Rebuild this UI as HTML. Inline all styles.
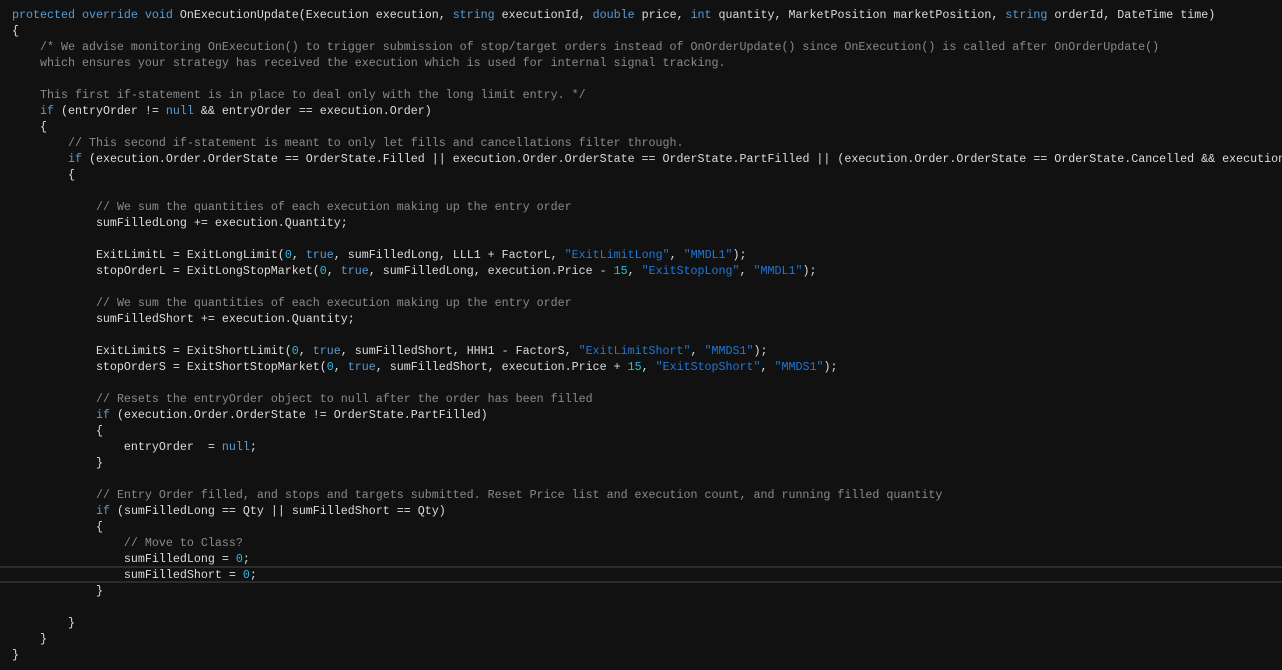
<!DOCTYPE html>
<html><head><meta charset="utf-8"><style>
html,body{margin:0;padding:0;background:#111111;width:1282px;height:670px;overflow:hidden;position:relative}
pre{margin:0;position:absolute;left:12px;top:7px;width:1270px;overflow:hidden;font-family:"Liberation Mono",monospace;font-size:11.67px;line-height:16px;color:#dcdcdc;white-space:pre}
.k{color:#569cd6}.c{color:#8a8a8a}.s{color:#1f78d6}.n{color:#2db7e8}
.hl{position:absolute;left:0;top:566px;width:1282px;height:13px;border-top:2px solid #2b2b2b;border-bottom:2px solid #2b2b2b}
</style></head><body>
<div class="hl"></div>
<pre><span class="k">protected override void</span> OnExecutionUpdate(Execution execution, <span class="k">string</span> executionId, <span class="k">double</span> price, <span class="k">int</span> quantity, MarketPosition marketPosition, <span class="k">string</span> orderId, DateTime time)
{
    <span class="c">/* We advise monitoring OnExecution() to trigger submission of stop/target orders instead of OnOrderUpdate() since OnExecution() is called after OnOrderUpdate()
    which ensures your strategy has received the execution which is used for internal signal tracking.

    This first if-statement is in place to deal only with the long limit entry. */</span>
    <span class="k">if</span> (entryOrder != <span class="k">null</span> &amp;&amp; entryOrder == execution.Order)
    {
        <span class="c">// This second if-statement is meant to only let fills and cancellations filter through.</span>
        <span class="k">if</span> (execution.Order.OrderState == OrderState.Filled || execution.Order.OrderState == OrderState.PartFilled || (execution.Order.OrderState == OrderState.Cancelled &amp;&amp; execution.Order.Filled &gt; 0))
        {

            <span class="c">// We sum the quantities of each execution making up the entry order</span>
            sumFilledLong += execution.Quantity;

            ExitLimitL = ExitLongLimit(<span class="n">0</span>, <span class="k">true</span>, sumFilledLong, LLL1 + FactorL, <span class="s">"ExitLimitLong"</span>, <span class="s">"MMDL1"</span>);
            stopOrderL = ExitLongStopMarket(<span class="n">0</span>, <span class="k">true</span>, sumFilledLong, execution.Price - <span class="n">15</span>, <span class="s">"ExitStopLong"</span>, <span class="s">"MMDL1"</span>);

            <span class="c">// We sum the quantities of each execution making up the entry order</span>
            sumFilledShort += execution.Quantity;

            ExitLimitS = ExitShortLimit(<span class="n">0</span>, <span class="k">true</span>, sumFilledShort, HHH1 - FactorS, <span class="s">"ExitLimitShort"</span>, <span class="s">"MMDS1"</span>);
            stopOrderS = ExitShortStopMarket(<span class="n">0</span>, <span class="k">true</span>, sumFilledShort, execution.Price + <span class="n">15</span>, <span class="s">"ExitStopShort"</span>, <span class="s">"MMDS1"</span>);

            <span class="c">// Resets the entryOrder object to null after the order has been filled</span>
            <span class="k">if</span> (execution.Order.OrderState != OrderState.PartFilled)
            {
                entryOrder  = <span class="k">null</span>;
            }

            <span class="c">// Entry Order filled, and stops and targets submitted. Reset Price list and execution count, and running filled quantity</span>
            <span class="k">if</span> (sumFilledLong == Qty || sumFilledShort == Qty)
            {
                <span class="c">// Move to Class?</span>
                sumFilledLong = <span class="n">0</span>;
                sumFilledShort = <span class="n">0</span>;
            }

        }
    }
}</pre>
</body></html>
